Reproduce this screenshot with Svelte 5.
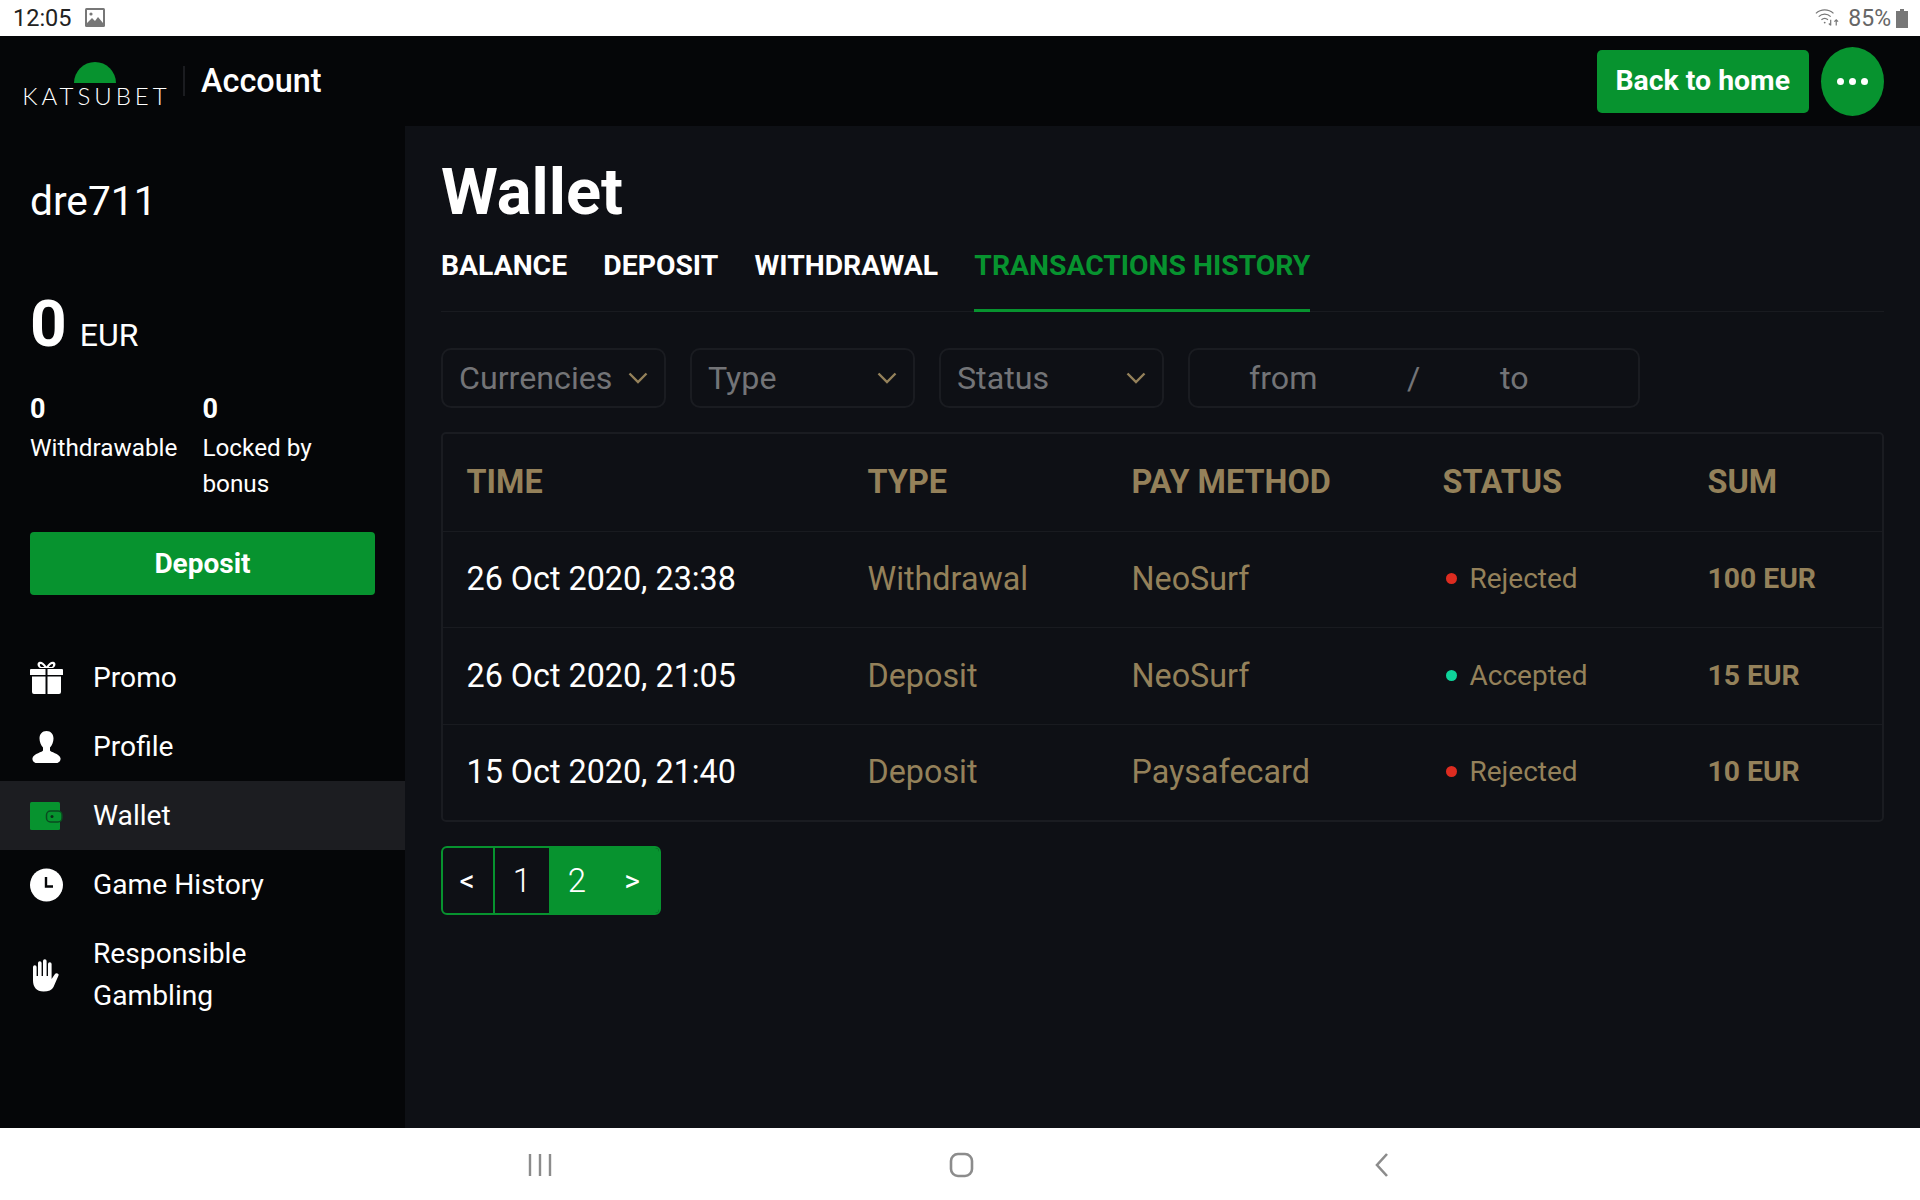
<script>
  const tabs = ['BALANCE', 'DEPOSIT', 'WITHDRAWAL', 'TRANSACTIONS HISTORY'];
  const rows = [
    { time: '26 Oct 2020, 23:38', type: 'Withdrawal', method: 'NeoSurf', status: 'Rejected', sum: '100 EUR' },
    { time: '26 Oct 2020, 21:05', type: 'Deposit', method: 'NeoSurf', status: 'Accepted', sum: '15 EUR' },
    { time: '15 Oct 2020, 21:40', type: 'Deposit', method: 'Paysafecard', status: 'Rejected', sum: '10 EUR' },
  ];
  const filters = ['Currencies', 'Type', 'Status'];
</script>

<div class="screen">
  <div class="status">
    <div class="status-left">
      <span class="clock">12:05</span>
      <svg width="20" height="20" viewBox="0 0 20 20">
        <rect x="0" y="0" width="20" height="19" rx="1.5" fill="#777" />
        <rect x="2" y="2" width="16" height="15" fill="#fff" />
        <circle cx="6" cy="6" r="1.6" fill="#777" />
        <path d="M2 15l5-5 3 3 3-4 5 6v2H2z" fill="#777" />
      </svg>
    </div>
    <div class="status-right">
      <svg width="24" height="22" viewBox="0 0 26 22" fill="none" stroke="#777" stroke-width="1.4">
        <path d="M1 6c5.500-5 13.500-5 19 0" />
        <path d="M4 9.500c3.800-3.500 9.200-3.500 13 0" />
        <path d="M7 13c2.200-2 4.800-2 7 0" />
        <circle cx="10.500" cy="16" r="1" fill="#777" stroke="none" />
        <path d="M17 13v6m-2-2l2 2m6 0v-6m-2 2l2-2l2 2" stroke-width="1.300" />
      </svg>
      <span class="pct">85%</span>
      <svg width="12" height="19" viewBox="0 0 12 19"><path d="M4 0h4v2h4v17H0V2h4z" fill="#777" /></svg>
    </div>
  </div>

  <header class="topbar">
    <div class="logo">
      <span class="sun"></span>
      <span class="logo-text">KATSUBET</span>
    </div>
    <span class="topbar-sep"></span>
    <span class="topbar-title">Account</span>
    <a class="home-btn">Back to home</a>
    <span class="more"><i></i><i></i><i></i></span>
  </header>

  <div class="body">
    <aside class="sidebar">
      <div class="user">dre711</div>
      <div class="balance"><b>0</b> <span>EUR</span></div>
      <div class="subs">
        <div class="sub sub-w"><b>0</b><span>Withdrawable</span></div>
        <div class="sub"><b>0</b><span>Locked by bonus</span></div>
      </div>
      <a class="deposit">Deposit</a>
      <nav class="menu">
        <a class="item">
          <svg class="ico" width="33" height="34" viewBox="0 0 33 34" fill="#fff">
            <path d="M9 1c2.500-1 5 1 7.500 4.500C19 2 21.500 0 24 1c2.500 1.200 1.500 5-1 6H10C7.500 6 6.500 2.200 9 1zm1.300 2c-1 .6-.2 2.500 1 3h3c-1-1.500-2.800-3.500-4-3zm12.400 0c-1.200-.5-3 1.500-4 3h3c1.200-.5 2-2.400 1-3z" fill-rule="evenodd" />
            <path d="M0 9a1 1 0 0 1 1-1h14.500v6H0zM17.500 8H32a1 1 0 0 1 1 1v5H17.500zM2 15.500h13.500V33H4a2 2 0 0 1-2-2zM17.500 15.500H31V31a2 2 0 0 1-2 2H17.500z" />
          </svg>
          <span>Promo</span>
        </a>
        <a class="item">
          <svg class="ico" width="33" height="34" viewBox="0 0 33 34" fill="#fff">
            <path d="M16.500 1c4.500 0 7 3.200 7 7.500 0 3.500-1.500 7-3.500 9v3c0 1.500 9.500 3 10.500 7.500.5 2.500-1.500 5-4 5h-20c-2.500 0-4.500-2.500-4-5 1-4.500 10.500-6 10.500-7.500v-3c-2-2-3.500-5.500-3.500-9C9.500 4.200 12 1 16.500 1z" />
          </svg>
          <span>Profile</span>
        </a>
        <a class="item active">
          <svg class="ico" width="33" height="34" viewBox="0 0 33 34">
            <rect x="0" y="3" width="30" height="28" rx="1.500" fill="#07932f" />
            <rect x="16.500" y="12" width="15.500" height="11" rx="4" fill="#07932f" stroke="#0b4a20" stroke-width="1.500" />
            <circle cx="22" cy="17.500" r="1.500" fill="#0b2f17" />
          </svg>
          <span>Wallet</span>
        </a>
        <a class="item">
          <svg class="ico" width="33" height="34" viewBox="0 0 33 34">
            <circle cx="16.500" cy="17" r="16.500" fill="#fff" />
            <path d="M16 9v9.500h7" fill="none" stroke="#050608" stroke-width="2.400" />
          </svg>
          <span>Game History</span>
        </a>
        <a class="item">
          <svg class="ico" width="33" height="34" viewBox="0 0 33 34" fill="#fff">
            <path d="M3 9a1.800 1.800 0 0 1 3.600 0v9H8V5a1.800 1.800 0 0 1 3.600 0v13H13V3a1.800 1.800 0 0 1 3.600 0v15H18V6a1.800 1.800 0 0 1 3.600 0v15l3.400-5c1-1.600 4.500-.5 3.500 1.500l-5 11.500C22 32 18.500 33.500 13.500 33.500 6.500 33.500 3 29 3 22.500z" />
          </svg>
          <span>Responsible<br />Gambling</span>
        </a>
      </nav>
    </aside>

    <main class="content">
      <h1>Wallet</h1>
      <div class="tabs">
        {#each tabs as tab, i}
          <a class="tab" class:current={i === 3}>{tab}</a>
        {/each}
      </div>

      <div class="filters">
        {#each filters as f}
          <div class="select">
            <span>{f}</span>
            <svg width="20" height="12" viewBox="0 0 20 12" fill="none" stroke="#94815a" stroke-width="2.400"><path d="M1.500 1.500L10 10l8.500-8.500" /></svg>
          </div>
        {/each}
        <div class="dates">
          <span class="from">from</span>
          <span class="slash">/</span>
          <span class="to">to</span>
        </div>
      </div>

      <div class="table">
        <div class="row head">
          <div>TIME</div><div>TYPE</div><div>PAY METHOD</div><div>STATUS</div><div>SUM</div>
        </div>
        {#each rows as r}
          <div class="row">
            <div class="time">{r.time}</div>
            <div>{r.type}</div>
            <div>{r.method}</div>
            <div class="state"><i class:ok={r.status === 'Accepted'}></i>{r.status}</div>
            <div class="sum">{r.sum}</div>
          </div>
        {/each}
      </div>

      <div class="pager">
        <a class="page lt">&lt;</a>
        <a class="page one">1</a>
        <a class="page on">2</a>
        <a class="page on gt">&gt;</a>
      </div>
    </main>
  </div>

  <div class="softkeys">
    <svg width="24" height="24" viewBox="0 0 24 24" fill="none" stroke="#8c8c8c" stroke-width="2.400"><path d="M2 1v22M12 1v22M22 1v22" /></svg>
    <svg width="25" height="26" viewBox="0 0 25 26" fill="none" stroke="#8c8c8c" stroke-width="2.600"><rect x="2" y="2" width="21" height="22" rx="7" /></svg>
    <svg width="16" height="24" viewBox="0 0 16 24" fill="none" stroke="#8c8c8c" stroke-width="2.600"><path d="M13 1L3 12l10 11" /></svg>
  </div>
</div>

<style>
  :global(body) {
    margin: 0;
    background: #0e1015;
    font-family: Roboto, 'Liberation Sans', sans-serif;
  }

  .screen {
    display: flex;
    flex-direction: column;
    width: 1920px;
    height: 1200px;
    overflow: hidden;
  }

  .status {
    display: flex;
    justify-content: space-between;
    align-items: center;
    height: 36px;
    padding: 0 12px 0 13px;
    background: #fff;
    color: #222;
    flex: none;
  }

  .status-left {
    display: flex;
    align-items: center;
    gap: 13px;
  }

  .clock {
    font-size: 23.500px;
  }

  .status-right {
    display: flex;
    align-items: center;
    gap: 5px;
    color: #666;
  }

  .pct {
    font-size: 23px;
    margin-left: 4px;
  }

  .topbar {
    display: flex;
    align-items: center;
    height: 90px;
    padding: 0 36px 0 23px;
    background: #050608;
    flex: none;
  }

  .logo {
    display: flex;
    flex-direction: column;
    align-items: center;
    width: 144px;
    margin-top: 8px;
  }

  .sun {
    width: 42px;
    height: 21px;
    border-radius: 21px 21px 0 0;
    background: #07932f;
  }

  .logo-text {
    margin-top: 1px;
    padding-left: 3px;
    font-family: Lato, sans-serif;
    font-size: 24px;
    font-weight: 300;
    line-height: 24px;
    letter-spacing: 4px;
    color: #fff;
    white-space: nowrap;
  }

  .topbar-sep {
    width: 2px;
    height: 30px;
    margin: 0 16px 0 16px;
    background: #1b1c20;
  }

  .topbar-title {
    flex: 1;
    font-size: 32.400px;
    font-weight: 500;
    color: #fff;
  }

  .home-btn {
    display: flex;
    align-items: center;
    padding: 0 19px 2px;
    height: 63px;
    box-sizing: border-box;
    border-radius: 5px;
    background: #07932f;
    color: #fff;
    font-size: 28.400px;
    font-weight: 700;
  }

  .more {
    display: flex;
    align-items: center;
    justify-content: center;
    gap: 5px;
    width: 63px;
    height: 69px;
    margin-left: 12px;
    border-radius: 50%;
    background: #07932f;
  }

  .more i {
    width: 7px;
    height: 7px;
    border-radius: 50%;
    background: #fff;
  }

  .body {
    display: flex;
    flex: 1;
    min-height: 0;
  }

  .sidebar {
    width: 405px;
    flex: none;
    background: #050608;
    color: #fff;
  }

  .user {
    padding: 52px 30px 0;
    font-size: 40.700px;
    line-height: 47px;
  }

  .balance {
    display: flex;
    align-items: baseline;
    gap: 13px;
    padding: 62px 30px 0;
    line-height: 75px;
  }

  .balance b {
    font-size: 64px;
  }

  .balance span {
    font-size: 32px;
  }

  .subs {
    display: flex;
    padding: 16px 30px 0;
    gap: 25px;
  }

  .sub {
    display: flex;
    flex-direction: column;
    flex: 1;
    min-width: 0;
    font-size: 24.300px;
    line-height: 36px;
  }

  .sub-w {
    flex: none;
  }

  .sub b {
    font-size: 27px;
    line-height: 41px;
  }

  .deposit {
    display: flex;
    align-items: center;
    justify-content: center;
    height: 63px;
    margin: 30px 30px 0;
    border-radius: 4px;
    background: #07932f;
    font-size: 28px;
    font-weight: 700;
  }

  .menu {
    margin-top: 48px;
  }

  .item {
    display: flex;
    align-items: center;
    gap: 30px;
    min-height: 69px;
    padding: 0 30px;
    font-size: 28.200px;
    line-height: 42px;
  }

  .item + .item:last-child {
    padding-top: 14px;
    padding-bottom: 14px;
  }

  .item.active {
    background: #1c1d21;
  }

  .ico {
    flex: none;
  }

  .content {
    flex: 1;
    min-width: 0;
    padding: 29px 36px 0 36px;
  }

  h1 {
    margin: 0;
    font-size: 65px;
    font-weight: 700;
    line-height: 75px;
    color: #fff;
  }

  .tabs {
    display: flex;
    gap: 36.300px;
    margin-top: 6px;
    border-bottom: 1px solid #191b20;
  }

  .tab {
    padding: 12px 0;
    height: 76px;
    box-sizing: border-box;
    font-size: 28.300px;
    font-weight: 700;
    line-height: 35px;
    color: #fff;
    margin-bottom: -1px;
    border-bottom: 3px solid transparent;
  }

  .tab.current {
    color: #07932f;
    border-bottom-color: #07932f;
  }

  .filters {
    display: flex;
    gap: 24px;
    margin-top: 36px;
  }

  .select,
  .dates {
    display: flex;
    align-items: center;
    height: 60px;
    box-sizing: border-box;
    border: 2px solid #1a1c21;
    border-radius: 10px;
    color: #737477;
    font-size: 32.200px;
  }

  .select {
    justify-content: space-between;
    width: 225px;
    padding: 0 16px;
  }

  .dates {
    width: 452px;
    padding-left: 59px;
  }

  .from {
    width: 158px;
  }

  .slash {
    width: 93px;
  }

  .table {
    margin-top: 24px;
    border: 2px solid #1a1c21;
    border-radius: 5px;
  }

  .row {
    display: grid;
    grid-template-columns: 401px 264px 311px 265px 1fr;
    align-items: center;
    height: 96.500px;
    padding-left: 23.500px;
    border-top: 1px solid #191b20;
    box-sizing: border-box;
    color: #94815a;
    font-size: 32.300px;
  }

  .row.head {
    border-top: 0;
    font-size: 32.400px;
    font-weight: 700;
  }

  .time {
    color: #fff;
  }

  .state {
    display: flex;
    align-items: center;
    font-size: 28px;
    padding-left: 3px;
    margin-top: -1px;
  }

  .state i {
    width: 11px;
    height: 11px;
    margin-right: 13px;
    border-radius: 50%;
    background: #dd2c20;
  }

  .state i.ok {
    background: #0ed39a;
  }

  .sum {
    font-size: 28.300px;
    font-weight: 700;
    margin-top: -1px;
  }

  .pager {
    display: flex;
    width: 220px;
    height: 69px;
    margin-top: 24px;
    box-sizing: border-box;
    border: 2px solid #07932f;
    border-radius: 6px;
    overflow: hidden;
    color: #fff;
    font-size: 33px;
    font-weight: 300;
  }

  .page {
    display: flex;
    align-items: center;
    justify-content: center;
    width: 56px;
    padding-bottom: 1px;
    box-sizing: border-box;
  }

  .lt {
    width: 52px;
    border-right: 2px solid #07932f;
    font-size: 30px;
    font-weight: 400;
    padding-right: 2px;
  }

  .one {
    width: 54px;
  }

  .on {
    background: #07932f;
  }

  .gt {
    flex: 1;
    font-size: 30px;
    font-weight: 400;
  }

  .softkeys {
    display: grid;
    grid-template-columns: repeat(3, 421px);
    justify-content: center;
    justify-items: center;
    align-items: center;
    height: 72px;
    padding: 2px 0 0 2px;
    box-sizing: border-box;
    flex: none;
    background: #fff;
  }
</style>
